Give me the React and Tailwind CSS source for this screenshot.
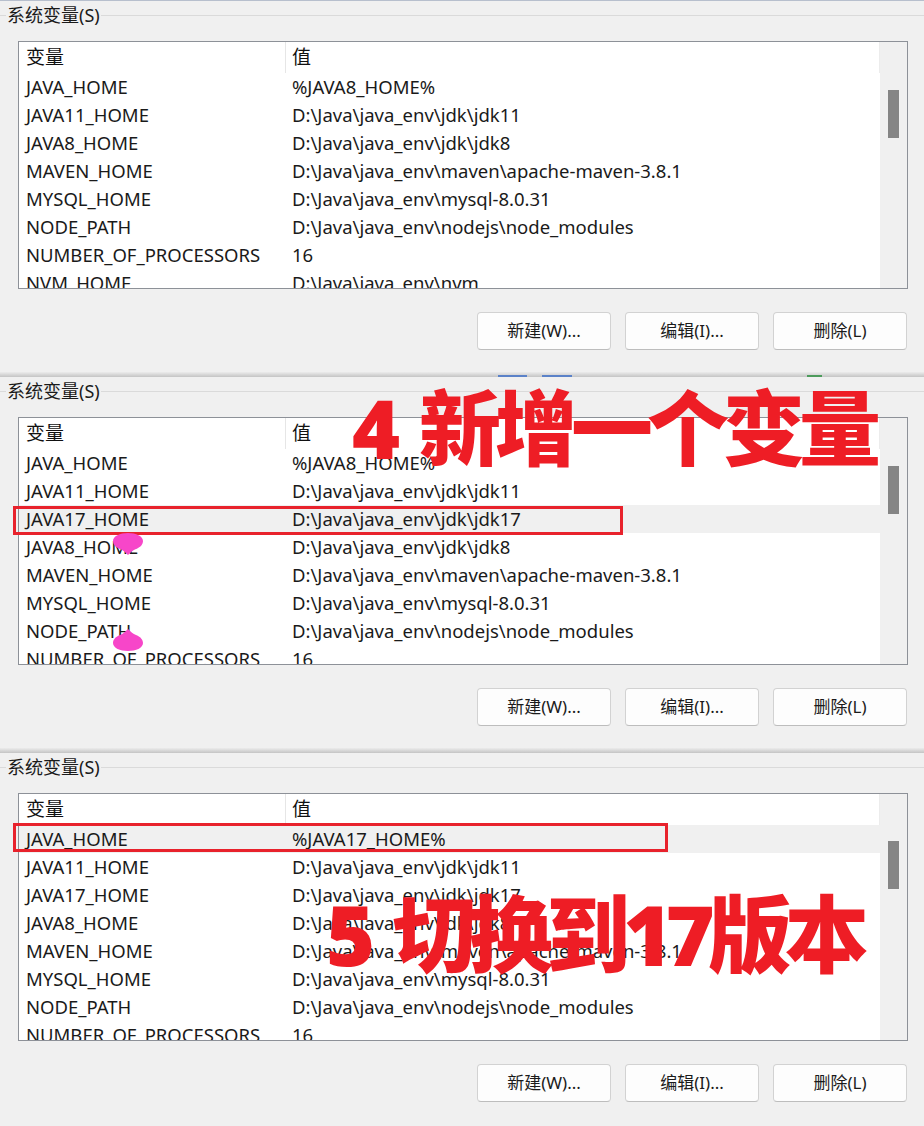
import React from 'react';

const FONT = { fontFamily: '"Noto Sans", "Noto Sans CJK SC", sans-serif' };

const baseRows = {
  java: ['JAVA_HOME', '%JAVA8_HOME%'],
  j11: ['JAVA11_HOME', 'D:\\Java\\java_env\\jdk\\jdk11'],
  j17: ['JAVA17_HOME', 'D:\\Java\\java_env\\jdk\\jdk17'],
  j8: ['JAVA8_HOME', 'D:\\Java\\java_env\\jdk\\jdk8'],
  maven: ['MAVEN_HOME', 'D:\\Java\\java_env\\maven\\apache-maven-3.8.1'],
  mysql: ['MYSQL_HOME', 'D:\\Java\\java_env\\mysql-8.0.31'],
  node: ['NODE_PATH', 'D:\\Java\\java_env\\nodejs\\node_modules'],
  cpu: ['NUMBER_OF_PROCESSORS', '16'],
  nvm: ['NVM_HOME', 'D:\\Java\\java_env\\nvm'],
};

const Blob = ({ pointUp, className }) => (
  <svg className={className} width="30" height="22" viewBox="0 0 30 22">
    {pointUp ? (
      <path d="M15 0 C18 3 20 5 23 6 C28 8 30 11 30 14 C30 19 23 22 15 22 C7 22 0 19 0 14 C0 11 2 8 7 6 C10 5 12 3 15 0 Z" fill="#f746c9" />
    ) : (
      <path d="M15 22 C12 19 10 17 7 16 C2 14 0 11 0 8 C0 3 7 0 15 0 C23 0 30 3 30 8 C30 11 28 14 23 16 C20 17 18 19 15 22 Z" fill="#f746c9" />
    )}
  </svg>
);

const Panel = ({ rows, highlight, boxWidth, boxTop, thumbTop, bottom, children }) => (
  <div className="relative h-[376px] bg-[#f0f0f0] flex flex-col" style={FONT}>
    {/* group title */}
    <div className="flex items-center h-[28px]">
      <div className="w-[6px] border-t border-[#dadada]" />
      <span className="px-[1px] text-[18px] leading-none text-[#1a1a1a]">系统变量(S)</span>
      <div className="flex-1 border-t border-[#dadada]" />
    </div>

    {/* list */}
    <div className="mt-[12px] ml-[18px] w-[890px] h-[248px] border border-[#8d9198] flex bg-white">
      <div className="flex-1 overflow-hidden">
        <div className="flex h-[31px] items-center text-[19px] text-[#111]">
          <div className="w-[267px] pl-[7px] h-full flex items-center border-r border-[#e6e6e6]">变量</div>
          <div className="flex-1 pl-[6px] h-full flex items-center border-r border-[#ececec]">值</div>
        </div>
        {rows.map(([name, value], i) => (
          <div
            key={name}
            className={`relative flex h-[28px] items-center text-[18.5px] text-[#1a1a1a] ${
              i === highlight ? 'bg-[#f0f0f0]' : ''
            }`}
          >
            <div className="w-[267px] pl-[7px] whitespace-nowrap">{name}</div>
            <div className="flex-1 pl-[6px] whitespace-nowrap">{value}</div>
          </div>
        ))}
      </div>
      <div className="w-[27px] bg-[#f0f0f0] pl-[8px]">
        <div className="w-[11px] h-[48px] bg-[#858585]" style={{ marginTop: thumbTop }} />
      </div>
    </div>

    {/* buttons */}
    <div className="mt-[23px] flex justify-end gap-[14px] pr-[17px]">
      {['新建(W)...', '编辑(I)...', '删除(L)'].map((label) => (
        <button
          key={label}
          className="w-[134px] h-[38px] rounded-[4px] border border-[#d2d2d2] border-b-[#bdbdbd] bg-[#fdfdfd] text-[17px] text-[#1b1b1b]"
        >
          {label}
        </button>
      ))}
    </div>

    <div className="flex-1" />
    {bottom}

    {/* red box on edited row */}
    {highlight != null && (
      <div
        className="absolute left-[13px] h-[29px] border-[3px] border-[#e8222c]"
        style={{ top: boxTop, width: boxWidth }}
      />
    )}
    {children}
  </div>
);

const Shadow = ({ colored }) => (
  <div className="relative h-[5px] bg-linear-to-b from-[#ececec] to-[#c4c4c4]">
    {colored && (
      <>
        <div className="absolute left-[498px] bottom-0 w-[29px] h-[2px] bg-[#5b82c8]" />
        <div className="absolute left-[542px] bottom-0 w-[30px] h-[2px] bg-[#5b82c8]" />
        <div className="absolute left-[807px] bottom-0 w-[15px] h-[2px] bg-[#4d9b5c]" />
      </>
    )}
  </div>
);

export default function App() {
  const r = baseRows;
  return (
    <div className="w-[924px] h-[1126px] overflow-hidden bg-[#f0f0f0] border-t border-[#b7bfcd]">
      <Panel
        rows={[r.java, r.j11, r.j8, r.maven, r.mysql, r.node, r.cpu, r.nvm]}
        thumbTop={48}
        bottom={<Shadow colored />}
      />
      <Panel
        rows={[r.java, r.j11, r.j17, r.j8, r.maven, r.mysql, r.node, r.cpu]}
        highlight={2}
        boxTop={129}
        boxWidth={610}
        thumbTop={48}
        bottom={<Shadow />}
      >
        <div className="absolute left-[352px] top-[9px] flex text-[82px] leading-none font-black text-[#ee1d25] whitespace-nowrap">
          <span>4</span>
          <span className="ml-[19px] tracking-[-6px]">新增一个变量</span>
        </div>
        <Blob className="absolute left-[113px] top-[156px]" />
        <Blob pointUp className="absolute left-[113px] top-[252px]" />
      </Panel>
      <Panel
        rows={[['JAVA_HOME', '%JAVA17_HOME%'], r.j11, r.j17, r.j8, r.maven, r.mysql, r.node, r.cpu]}
        highlight={0}
        boxTop={70}
        boxWidth={655}
        thumbTop={47}
        bottom={<div className="h-[1px] bg-black" />}
      >
        <div className="absolute left-[326px] top-[139px] flex text-[84px] leading-none font-black text-[#ee1d25] whitespace-nowrap">
          <span>5</span>
          <span className="ml-[17px] tracking-[-7px]">切换到17版本</span>
        </div>
      </Panel>
    </div>
  );
}
